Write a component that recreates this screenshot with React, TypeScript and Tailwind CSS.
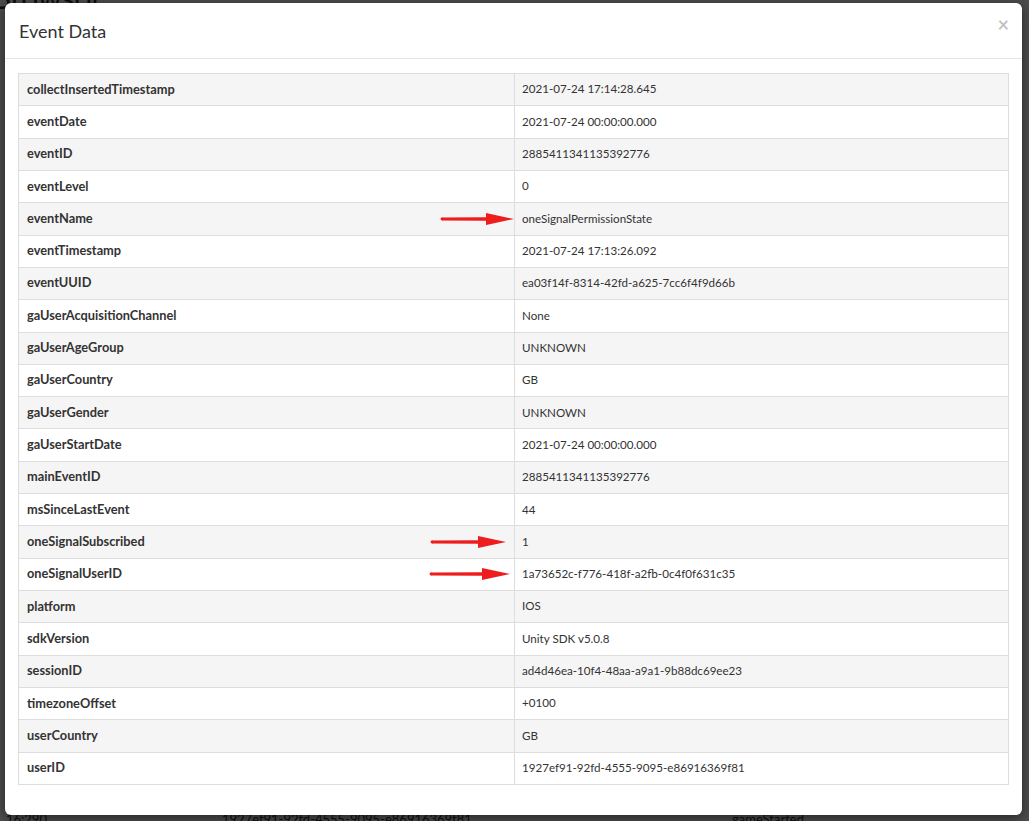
import React from "react";

type Row = { key: string; value: string; arrow?: { left: number; width: number } };

const ROWS: Row[] = [
  { key: "collectInsertedTimestamp", value: "2021-07-24 17:14:28.645" },
  { key: "eventDate", value: "2021-07-24 00:00:00.000" },
  { key: "eventID", value: "2885411341135392776" },
  { key: "eventLevel", value: "0" },
  { key: "eventName", value: "oneSignalPermissionState", arrow: { left: 421, width: 74 } },
  { key: "eventTimestamp", value: "2021-07-24 17:13:26.092" },
  { key: "eventUUID", value: "ea03f14f-8314-42fd-a625-7cc6f4f9d66b" },
  { key: "gaUserAcquisitionChannel", value: "None" },
  { key: "gaUserAgeGroup", value: "UNKNOWN" },
  { key: "gaUserCountry", value: "GB" },
  { key: "gaUserGender", value: "UNKNOWN" },
  { key: "gaUserStartDate", value: "2021-07-24 00:00:00.000" },
  { key: "mainEventID", value: "2885411341135392776" },
  { key: "msSinceLastEvent", value: "44" },
  { key: "oneSignalSubscribed", value: "1", arrow: { left: 411, width: 76 } },
  { key: "oneSignalUserID", value: "1a73652c-f776-418f-a2fb-0c4f0f631c35", arrow: { left: 410, width: 81 } },
  { key: "platform", value: "IOS" },
  { key: "sdkVersion", value: "Unity SDK v5.0.8" },
  { key: "sessionID", value: "ad4d46ea-10f4-48aa-a9a1-9b88dc69ee23" },
  { key: "timezoneOffset", value: "+0100" },
  { key: "userCountry", value: "GB" },
  { key: "userID", value: "1927ef91-92fd-4555-9095-e86916369f81" },
];

function RedArrow({ width }: { width: number }) {
  const head = 28;
  return (
    <svg width={width} height={16} viewBox={`0 0 ${width} 16`}>
      <path d={`M2 6.6 L${width - head} 6.2 L${width - head} 9.8 L2 9.4 Z`} fill="#ee1c1c" />
      <circle cx={2} cy={8} r={1.45} fill="#ee1c1c" />
      <path d={`M${width - head} 2 L${width} 8 L${width - head} 14 Z`} fill="#ee1c1c" />
    </svg>
  );
}

export default function App() {
  return (
    <div
      className="relative w-[1029px] h-[821px] overflow-hidden bg-white text-[#333]"
      style={{ fontFamily: "Lato, 'Open Sans', sans-serif" }}
    >
      {/* page behind the dialog */}
      <div className="flex flex-col justify-between h-full px-[6px]">
        <div className="text-[30px] leading-none -mt-[18px] -ml-[14px]">Browsor</div>
        <div className="grid grid-cols-[216px_510px_1fr] text-[13px] -mb-[8px]">
          <span>16:290</span>
          <span>1927ef91-92fd-4555-9095-e86916369f81</span>
          <span>gameStarted</span>
        </div>
      </div>

      {/* backdrop */}
      <div className="absolute inset-0 bg-black/70" />

      {/* dialog */}
      <div className="absolute left-[5px] top-[3px] w-[1017px] h-[812px] bg-white rounded-[6px] shadow-[0_3px_12px_rgba(0,0,0,0.5)] flex flex-col">
        <div className="h-[56px] shrink-0 border-b border-[#e5e5e5] flex items-start justify-between pl-[14px] pr-[13px]">
          <h4 className="text-[18px] leading-none mt-[19px] text-[#333]">Event Data</h4>
          <button className="text-[20px] leading-none font-bold text-black/25 mt-[11px]">×</button>
        </div>

        <div className="px-[13px] pt-[14px]">
          <div className="border border-b-0 border-[#dddddd]">
            {ROWS.map((row, i) => (
              <div
                key={row.key}
                className={`relative grid grid-cols-[495px_1fr] h-[32.32px] border-b border-[#dddddd] ${
                  i % 2 === 0 ? "bg-[#f5f5f5]" : "bg-white"
                }`}
              >
                <div className="flex items-center pl-[8px] pb-[1px] text-[12.8px] font-bold text-[#333]">{row.key}</div>
                <div className="flex items-center pl-[7px] pb-[1px] text-[11.6px] border-l border-[#dddddd] text-[#333]">
                  {row.value}
                </div>
                {row.arrow && (
                  <div className="absolute top-1/2 -translate-y-1/2" style={{ left: row.arrow.left }}>
                    <RedArrow width={row.arrow.width} />
                  </div>
                )}
              </div>
            ))}
          </div>
        </div>
      </div>
    </div>
  );
}
